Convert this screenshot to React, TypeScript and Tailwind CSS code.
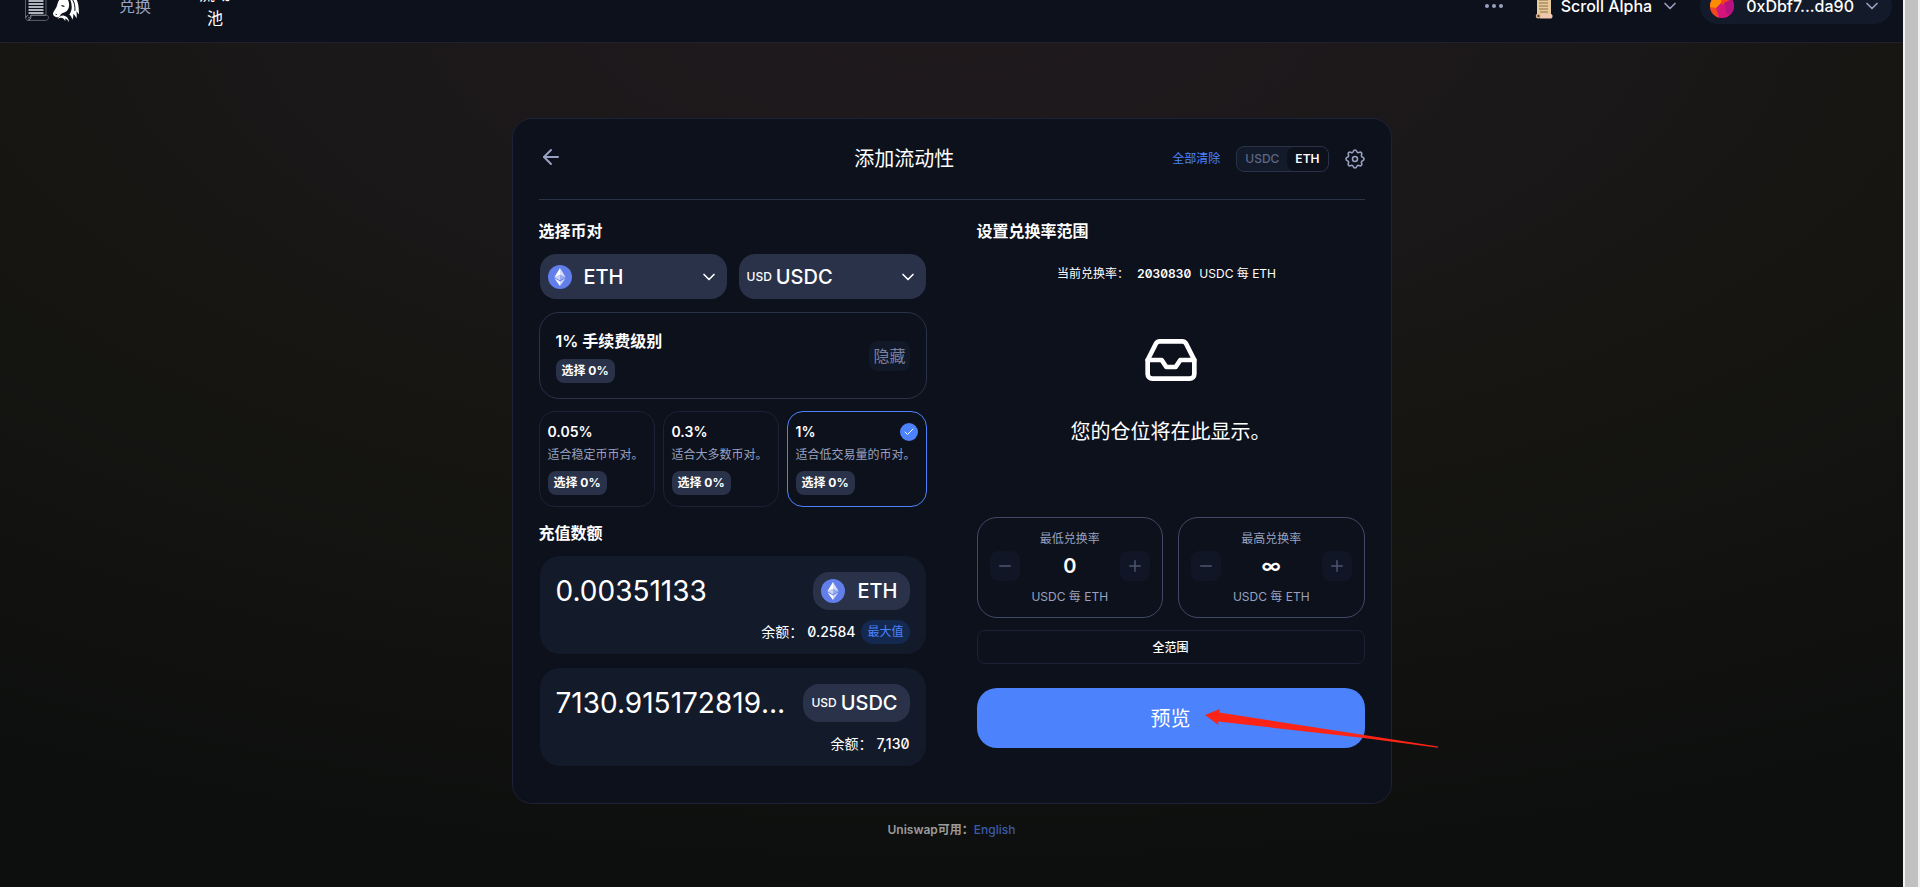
import { useState } from "react";
import { ArrowLeft, Check, ChevronDown, Inbox, Minus, Plus } from "lucide-react";

function ScrollMark() {
  return (
    <svg viewBox="0 0 26 30" className="h-[30px] w-[26px]" fill="none" aria-hidden="true">
      <path d="M1.500 2.500v24.200c0 1.600 1 2.700 2.600 2.700h17.400c1.800 0 3-1.200 3-2.900 0-1.400-.9-2.400-2.300-2.400H22V2.500" stroke="#5d606c" />
      <path d="M4.200 29c1.500 0 2.600-1.100 2.600-2.500v-2.300H22M4.200 24.600c-1.300 0-2.200.8-2.200 2.100M4.200 26.800h1.600" stroke="#9a9daa" />
      <path d="M4.500 4h15M4.500 7h15M4.500 10h15M4.500 13h15M4.500 16h15M4.500 19h15M4.500 22h15" stroke="#e6e8ee" strokeWidth="1.300" />
    </svg>
  );
}

function UnicornMark() {
  return (
    <svg viewBox="0 0 28 34" className="h-[34px] w-[28px]" fill="#fff" aria-hidden="true">
      <path d="M10 3c1 2.500 2.500 4.500 4.500 6 2 2 2.800 4.500 2.600 7.500-.2 3.300-1.800 5.800-4.300 6.800-2 .8-3.600.9-4.300 2.700-.6 1.500-2 2.600-3.700 2.300C2.600 28 .9 26.700 1 24.700c.2-2.300 2.400-4 3.500-6.700C5.700 15 6 11.500 8.500 9.500Z" />
      <path d="M15 6c5-.5 9 2.300 10.600 7 1.200 3.800 1.200 7.800 1.400 12.500-.9-1.400-1.700-2.400-2.700-3.200.6 2.500.6 4.500.2 7-.9-2-1.900-3.400-3.300-4.600.3 2.300.1 4-.9 6-.6-2.500-1.500-4-3-5.200 1.600-2.200 2.500-4.800 2.400-8C19.600 13 18 9 15 6Z" />
      <path d="M5.500 30c1.500-2.400 4-3.800 6.600-3.300 3 .6 4.900 3.200 4.900 6.600-1-2-2.300-3.200-4-3.800.4.900.5 1.700.3 2.600-.9-1.900-2-2.900-3.500-3.200-1.400-.2-2.800.2-4.300 1.100Z" />
      <path d="M9 16.600c1.300-.7 2.700-.4 3.900.8-1.300.8-2.900.6-3.900-.8ZM3.300 25.500c.6-.6 1.300-.6 1.800 0-.5.6-1.300.6-1.800 0Z" fill="#0d111c" />
      <path d="M20.500 10.500c2 3.500 2.700 7 2.400 11.500" stroke="#0d111c" fill="none" />
    </svg>
  );
}

function ScrollBadge() {
  return (
    <svg viewBox="0 0 18 26" className="h-[26px] w-[18px]" aria-hidden="true">
      <path fill="#e8c99a" d="M2 0h14v23H2z" />
      <path d="M4 4h9M4 7h9M4 10h9M4 13h9M4 16h9M5 19h8" stroke="#8a6f4a" strokeWidth="1" />
      <path fill="#efc7b0" d="M5 21h11c2 0 2 4.500 0 4.500H5Z" />
      <path fill="#d9b28c" d="M3.300 20.500a2.500 2.500 0 1 1 0 5 2.500 2.500 0 0 1 0-5Z" />
      <circle cx="3.400" cy="23" r="1.100" fill="#3b2c20" />
    </svg>
  );
}

function Avatar() {
  return (
    <svg viewBox="0 0 24 24" className="size-6" aria-hidden="true">
      <defs>
        <clipPath id="avatar-round">
          <circle cx="12" cy="12" r="12" />
        </clipPath>
      </defs>
      <g clipPath="url(#avatar-round)">
        <path fill="#d3147a" d="M0 0h24v24H0z" />
        <path fill="#f73c1d" d="M9 0h15v5L12 11Z" />
        <path fill="#fb8c00" d="M0 0h12l-1 9-6 6-5-1Z" />
        <path fill="#f2481f" d="m0 13 6 1 3 10H0Z" />
        <path fill="#b5127f" d="m14 9 10-5v14l-7 3Z" />
      </g>
    </svg>
  );
}

function EthIcon() {
  return (
    <svg viewBox="0 0 24 24" className="size-6 shrink-0" aria-hidden="true">
      <circle cx="12" cy="12" r="12" fill="#627eea" />
      <path fill="#fff" fillOpacity=".75" d="M12 3v6.700l5.600 2.500Z" />
      <path fill="#fff" d="M12 3 6.400 12.200 12 9.700Z" />
      <path fill="#fff" fillOpacity=".7" d="M12 16.500V21l5.600-7.800Z" />
      <path fill="#fff" d="M12 21v-4.500l-5.600-3.300Z" />
      <path fill="#fff" fillOpacity=".35" d="m12 15.400 5.600-3.200L12 9.700Z" />
      <path fill="#fff" fillOpacity=".65" d="m6.400 12.200 5.600 3.200V9.700Z" />
    </svg>
  );
}

function GearIcon() {
  return (
    <svg viewBox="0 0 24 24" className="size-6" fill="none" stroke="#98a1c0" strokeWidth="1.600" strokeLinejoin="round" aria-hidden="true">
      <path d="M10.325 4.317c.426-1.756 2.924-1.756 3.350 0a1.724 1.724 0 0 0 2.573 1.066c1.543-.94 3.310.826 2.370 2.370a1.724 1.724 0 0 0 1.065 2.572c1.756.426 1.756 2.924 0 3.350a1.724 1.724 0 0 0-1.066 2.573c.94 1.543-.826 3.310-2.370 2.370a1.724 1.724 0 0 0-2.572 1.065c-.426 1.756-2.924 1.756-3.350 0a1.724 1.724 0 0 0-2.573-1.066c-1.543.94-3.310-.826-2.370-2.370a1.724 1.724 0 0 0-1.065-2.572c-1.756-.426-1.756-2.924 0-3.350a1.724 1.724 0 0 0 1.066-2.573c-.94-1.543.826-3.310 2.370-2.370.996.608 2.296.07 2.572-1.065Z" />
      <circle cx="12" cy="12" r="2.500" />
    </svg>
  );
}

function TokenLabel({ symbol }: { symbol: "ETH" | "USDC" }) {
  return symbol === "ETH" ? (
    <span className="flex items-center gap-3">
      <EthIcon />
      <span className="text-xl">ETH</span>
    </span>
  ) : (
    <span className="flex items-center gap-1">
      <span className="text-xs">USD</span>
      <span className="text-xl">USDC</span>
    </span>
  );
}

function TokenSelect({ symbol }: { symbol: "ETH" | "USDC" }) {
  return (
    <button type="button" className="flex h-[45px] flex-1 items-center justify-between rounded-2xl bg-[#293249] px-2 font-medium">
      <TokenLabel symbol={symbol} />
      <ChevronDown className="size-5" strokeWidth={2} />
    </button>
  );
}

function PickBadge() {
  return <span className="rounded-lg bg-[#293249] px-1.5 text-xs leading-6 font-bold">选择 0%</span>;
}

const tiers = [
  { rate: "0.05%", note: "适合稳定币币对。", width: "w-[116px]" },
  { rate: "0.3%", note: "适合大多数币对。", width: "w-[116px]" },
  { rate: "1%", note: "适合低交易量的币对。", width: "flex-1" },
];

function AmountPanel({ symbol, initial, balance, max }: { symbol: "ETH" | "USDC"; initial: string; balance: string; max?: boolean }) {
  const [amount, setAmount] = useState(initial);
  return (
    <div className="mx-px rounded-[20px] bg-[#131a2a] px-4 pt-4 pb-2.5">
      <div className="flex items-center gap-3">
        <input
          aria-label={`${symbol} 数额`}
          value={amount}
          onChange={(e) => setAmount(e.target.value)}
          className="h-[38px] w-0 flex-1 overflow-hidden bg-transparent text-[28px] text-ellipsis outline-none"
        />
        <button type="button" className="flex h-[38px] items-center rounded-2xl bg-[#293249] pr-3 pl-2 font-medium">
          <TokenLabel symbol={symbol} />
        </button>
      </div>
      <div className="mt-2.5 flex h-6 items-center justify-end text-sm">
        <span>余额：</span>
        <span className="ml-1 font-medium slashed-zero">{balance}</span>
        {max && (
          <button type="button" className="ml-1.5 rounded-full bg-[#153160]/70 px-1.5 text-xs leading-6 text-[#4c82fb]">
            最大值
          </button>
        )}
      </div>
    </div>
  );
}

function PricePanel({ label, initial }: { label: string; initial: string }) {
  const [price, setPrice] = useState(initial);
  return (
    <div className="flex flex-1 flex-col rounded-[20px] border border-[#404a67] px-3 pt-[13px] pb-3 text-center">
      <span className="text-xs leading-4 text-[#98a1c0]">{label}</span>
      <div className="mt-1 flex items-center justify-between">
        <button type="button" aria-label="减少" className="flex size-[30px] items-center justify-center rounded-lg bg-[#101626] text-[#4d5672]">
          <Minus className="size-[18px]" strokeWidth={2} />
        </button>
        <input
          aria-label={label}
          value={price}
          onChange={(e) => setPrice(e.target.value)}
          className="h-[30px] w-0 flex-1 bg-transparent text-center text-xl font-semibold outline-none"
        />
        <button type="button" aria-label="增加" className="flex size-[30px] items-center justify-center rounded-lg bg-[#101626] text-[#4d5672]">
          <Plus className="size-[18px]" strokeWidth={2} />
        </button>
      </div>
      <span className="mt-2 text-xs leading-4 text-[#98a1c0]">USDC 每 ETH</span>
    </div>
  );
}

export default function App() {
  const [tier, setTier] = useState("1%");
  return (
    <div className="flex min-h-screen bg-[#0d0f0e] font-['Inter','Noto_Sans_CJK_SC',sans-serif] text-white [font-optical-sizing:none]">
      <div className="flex min-w-0 flex-1 flex-col bg-[radial-gradient(ellipse_100%_100%_at_50%_0%,#201a1d_0%,#1b181a_30%,#171613_50%,#0d0f0e_100%)]">
        <header className="flex h-[43px] items-end overflow-hidden border-b border-[#241f2c] bg-[#0d111c]">
          <div className="flex h-[72px] flex-1 items-center justify-between pr-[11px] pl-6">
            <nav className="flex items-center">
              <a href="#home" aria-label="首页" className="flex items-center gap-0.5">
                <ScrollMark />
                <UnicornMark />
              </a>
              <a href="#swap" className="ml-[39px] text-base leading-6 text-[#98a1c0]">兑换</a>
              <a href="#pool" className="ml-12 w-8 text-center text-base leading-6">流动池</a>
            </nav>
            <div className="flex items-center">
              <button type="button" aria-label="更多" className="flex gap-[3px]">
                <span className="size-1 rounded-full bg-[#98a1c0]" />
                <span className="size-1 rounded-full bg-[#98a1c0]" />
                <span className="size-1 rounded-full bg-[#98a1c0]" />
              </button>
              <button type="button" className="ml-8 flex items-center gap-2 font-medium">
                <ScrollBadge />
                Scroll Alpha
                <ChevronDown className="size-5 text-[#98a1c0]" />
              </button>
              <button type="button" className="ml-5 flex h-9 items-center rounded-full bg-[#131a2a] pr-2.5 pl-2.5 font-medium">
                <Avatar />
                <span className="ml-3">0xDbf7...da90</span>
                <ChevronDown className="ml-2 size-5 text-[#98a1c0]" />
              </button>
            </div>
          </div>
        </header>

        <main className="flex flex-col items-center px-4 pt-[75px]">
          <section className="w-full max-w-[880px] rounded-[20px] border border-[#1b2236] bg-[#0d111c] px-[26px] pb-[37px]">
            <div className="grid h-[81px] grid-cols-[10fr_auto_13fr] items-center border-b border-[#293249]">
              <a href="#back" aria-label="返回" className="justify-self-start pb-1 text-[#98a1c0]">
                <ArrowLeft className="size-6" />
              </a>
              <h1 className="text-xl">添加流动性</h1>
              <div className="-mr-0.5 flex items-center justify-end">
                <button type="button" className="text-xs text-[#4c82fb]">全部清除</button>
                <div className="mr-3.5 ml-4 flex rounded-lg border border-[#293249] bg-[#131a2a] text-xs leading-6">
                  <button type="button" className="rounded-lg px-2 font-medium text-[#5d6785]">USDC</button>
                  <button type="button" className="rounded-lg bg-[#0d111c] px-2 font-semibold">ETH</button>
                </div>
                <button type="button" aria-label="设置">
                  <GearIcon />
                </button>
              </div>
            </div>

            <div className="grid grid-cols-2 gap-[50px] pt-[19px]">
              <div>
                <h2 className="text-base leading-6 font-bold">选择币对</h2>
                <div className="mx-px mt-[11px] flex gap-3">
                  <TokenSelect symbol="ETH" />
                  <TokenSelect symbol="USDC" />
                </div>
                <div className="mt-[13px] flex h-[87px] items-center justify-between rounded-[20px] border border-[#293249] px-4">
                  <div className="flex flex-col items-start gap-1.5">
                    <span className="text-base leading-6 font-semibold">1% 手续费级别</span>
                    <PickBadge />
                  </div>
                  <button type="button" className="rounded-lg bg-[#111827] px-1 text-base leading-[30px] text-[#7780a0]">隐藏</button>
                </div>
                <div className="mt-3 flex gap-2">
                  {tiers.map((t) => (
                    <button
                      key={t.rate}
                      type="button"
                      aria-pressed={tier === t.rate}
                      onClick={() => setTier(t.rate)}
                      className={`${t.width} ${tier === t.rate ? "border-[#4c82fb]" : "border-[#1b2236]"} flex h-24 flex-col items-start rounded-2xl border px-2 pt-2.5 text-left`}
                    >
                      <span className="flex w-full items-center justify-between text-sm leading-5 font-semibold">
                        {t.rate}
                        {tier === t.rate && (
                          <span className="flex size-[18px] items-center justify-center rounded-full bg-[#4c82fb]">
                            <Check className="size-3" strokeWidth={2} />
                          </span>
                        )}
                      </span>
                      <span className="mt-[3px] mb-1.5 text-xs leading-5 whitespace-nowrap text-[#98a1c0]">{t.note}</span>
                      <PickBadge />
                    </button>
                  ))}
                </div>
                <h2 className="mt-3.5 text-base leading-6 font-bold">充值数额</h2>
                <div className="mt-[11px] flex flex-col gap-3.5">
                  <AmountPanel symbol="ETH" initial="0.00351133" balance="0.2584" max />
                  <AmountPanel symbol="USDC" initial="7130.91517281904326" balance="7,130" />
                </div>
              </div>

              <div className="flex flex-col">
                <h2 className="text-base leading-6 font-bold">设置兑换率范围</h2>
                <p className="mt-[21px] flex items-center justify-center pr-2 text-xs leading-5">
                  当前兑换率：
                  <span className="mx-2 font-semibold slashed-zero tabular-nums">2030830</span>
                  USDC 每 ETH
                </p>
                <div className="mt-12 flex flex-col items-center">
                  <Inbox className="size-14" strokeWidth={2} />
                  <p className="mt-7 text-xl leading-8">您的仓位将在此显示。</p>
                </div>
                <div className="mt-[69px] flex gap-[15px]">
                  <PricePanel label="最低兑换率" initial="0" />
                  <PricePanel label="最高兑换率" initial="∞" />
                </div>
                <button type="button" className="mt-3 h-[34px] rounded-lg border border-[#1b2236] pt-0.5 text-xs font-medium">全范围</button>
                <div className="relative mt-6">
                  <button type="button" className="h-[60px] w-full rounded-[20px] bg-[#4c82fb] pt-0.5 text-xl">预览</button>
                  <svg viewBox="0 0 236 42" className="pointer-events-none absolute top-[20px] left-[227px] h-[42px] w-[236px]" aria-hidden="true">
                    <path fill="#fb2416" d="M1 7 16 1l-1 3.500L160 27l74 11.500v1.200L160 30 14 13.500l.5 3.500Z" />
                  </svg>
                </div>
              </div>
            </div>
          </section>
          <p className="mt-4 text-xs leading-5 font-semibold text-[#9b9b9b]">
            Uniswap可用：
            <a href="#en" className="font-medium text-[#3a5ba8]">English</a>
          </p>
        </main>
      </div>
      <div className="w-[17px] border-x-2 border-[#f1f1f1] bg-[#c1c1c1]" />
    </div>
  );
}
